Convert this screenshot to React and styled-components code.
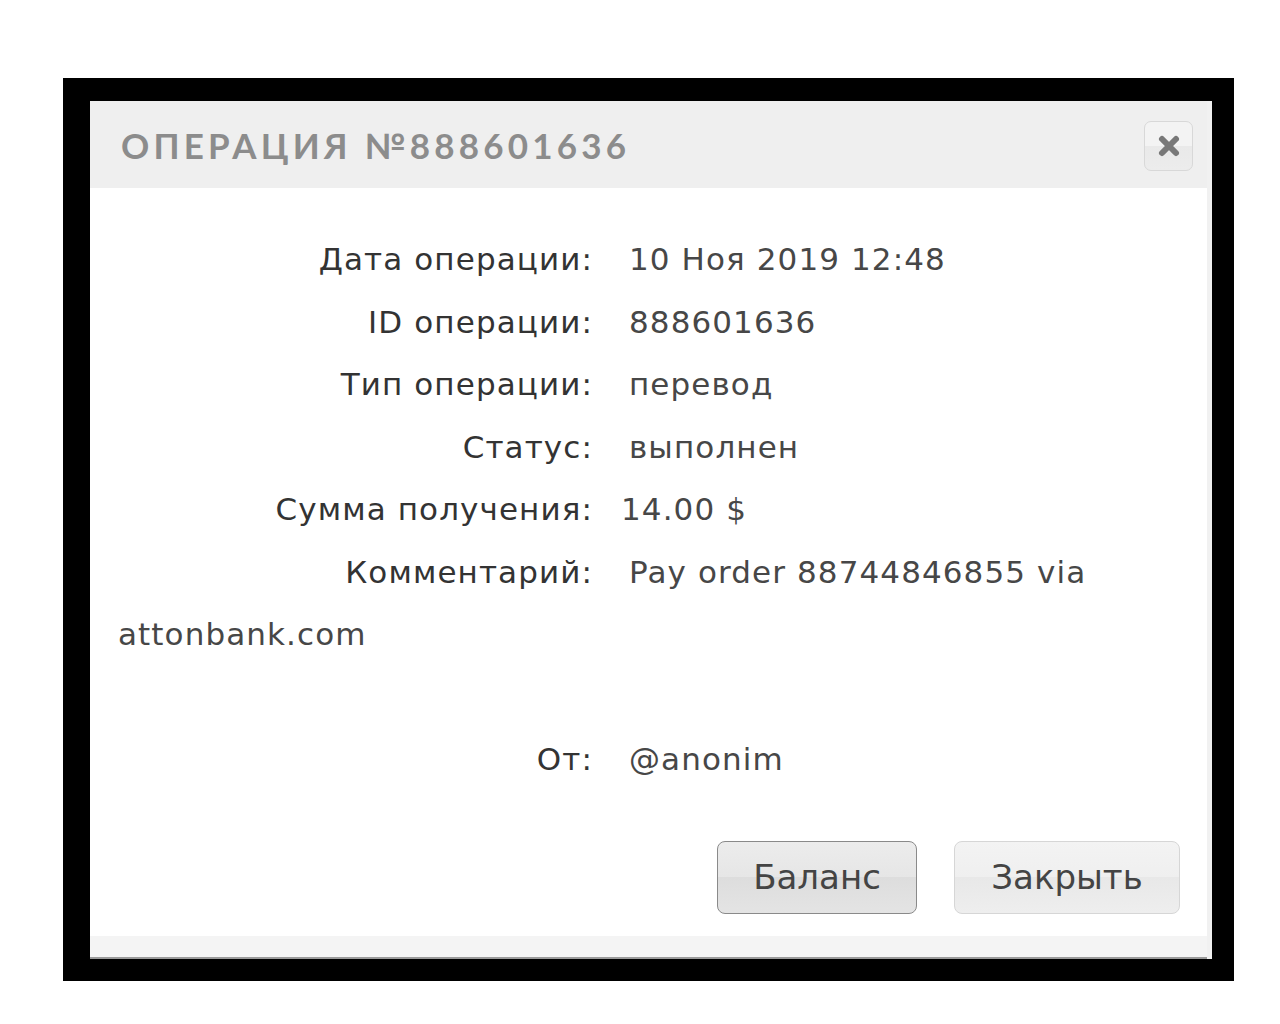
import React from "react";
import styled, { createGlobalStyle } from "styled-components";

const GlobalStyle = createGlobalStyle`
  html, body { margin: 0; padding: 0; background: #ffffff; }
  body { font-family: "DejaVu Sans", "Noto Sans", sans-serif; }
`;

const Page = styled.div`
  padding: 78px 0 0 63px;
  width: 1280px;
  height: 1024px;
  box-sizing: border-box;
`;

const Frame = styled.div`
  width: 1171px;
  box-sizing: border-box;
  background: #000;
  padding: 23px 22px 22px 27px;
`;

const Dialog = styled.div`
  background: #fff;
  display: flex;
  flex-direction: column;
  border-right: 5px solid #f1f1f1;
`;

const Header = styled.div`
  height: 87px;
  background: #efefef;
  display: flex;
  align-items: center;
  justify-content: space-between;
  padding: 0 14px 0 31px;
`;

const Title = styled.h1`
  margin: 0;
  font-family: "Lato", "Noto Sans", sans-serif;
  font-weight: 700;
  font-size: 35px;
  letter-spacing: 4.2px;
  color: #8c8c8c;
`;

const CloseButton = styled.button`
  width: 49px;
  height: 50px;
  border: 1px solid #d8d8d8;
  border-radius: 7px;
  background: linear-gradient(#f3f3f3 0%, #f3f3f3 50%, #e9e9e9 50%, #ececec 100%);
  display: flex;
  align-items: center;
  justify-content: center;
  padding: 0;
  margin-top: 2px;
`;

const Body = styled.div`
  padding: 40px 70px 0 28px;
  font-family: "DejaVu Sans", "Noto Sans", sans-serif;
  font-size: 31px;
  letter-spacing: 1.1px;
  line-height: 62.5px;
  color: #3c3c3c;
`;

const Row = styled.div``;

const Label = styled.span`
  display: inline-block;
  width: 475px;
  text-align: right;
  color: #333;
`;

const Value = styled.span`
  margin-left: ${(p) => p.$gap || 36}px;
  color: #474747;
`;

const Spacer = styled.div`
  height: 62.5px;
`;

const Buttons = styled.div`
  display: flex;
  justify-content: flex-end;
  gap: 37px;
  padding: 50px 27px 22px 0;
`;

const Button = styled.button`
  height: 73px;
  width: ${(p) => p.$w}px;
  border-radius: 8px;
  border: 1.5px solid ${(p) => (p.$active ? "#8a8a8a" : "#d6d6d6")};
  background: linear-gradient(
    ${(p) => (p.$active ? "#ececec" : "#f3f3f3")} 0%,
    ${(p) => (p.$active ? "#e6e6e6" : "#efefef")} 50%,
    ${(p) => (p.$active ? "#dddddd" : "#e8e8e8")} 50%,
    ${(p) => (p.$active ? "#e4e4e4" : "#eeeeee")} 100%
  );
  font-family: "DejaVu Sans", "Noto Sans", sans-serif;
  font-size: 34px;
  color: #444;
  padding: 0;
`;

const Footer = styled.div`
  height: 21px;
  background: #f4f4f4;
  border-bottom: 2px solid #9a9a9a;
`;

const CloseIcon = () => (
  <svg width="24" height="24" viewBox="0 0 24 24">
    <path d="M5 5 L19 19 M19 5 L5 19" stroke="#787878" strokeWidth="6" strokeLinecap="round" />
  </svg>
);

const rows = [
  ["Дата операции:", "10 Ноя 2019 12:48"],
  ["ID операции:", "888601636"],
  ["Тип операции:", "перевод"],
  ["Статус:", "выполнен"],
  ["Сумма получения:", "14.00 $", 28],
  ["Комментарий:", "Pay order 88744846855 via attonbank.com"],
];

export default function App() {
  return (
    <>
      <GlobalStyle />
      <Page>
        <Frame>
          <Dialog>
            <Header>
              <Title>ОПЕРАЦИЯ №888601636</Title>
              <CloseButton aria-label="close">
                <CloseIcon />
              </CloseButton>
            </Header>
            <Body>
              {rows.map(([l, v, g]) => (
                <Row key={l}>
                  <Label>{l}</Label>
                  <Value $gap={g}>{v}</Value>
                </Row>
              ))}
              <Spacer />
              <Row>
                <Label>От:</Label>
                <Value>@anonim</Value>
              </Row>
            </Body>
            <Buttons>
              <Button $active $w={200}>Баланс</Button>
              <Button $w={226}>Закрыть</Button>
            </Buttons>
            <Footer />
          </Dialog>
        </Frame>
      </Page>
    </>
  );
}
